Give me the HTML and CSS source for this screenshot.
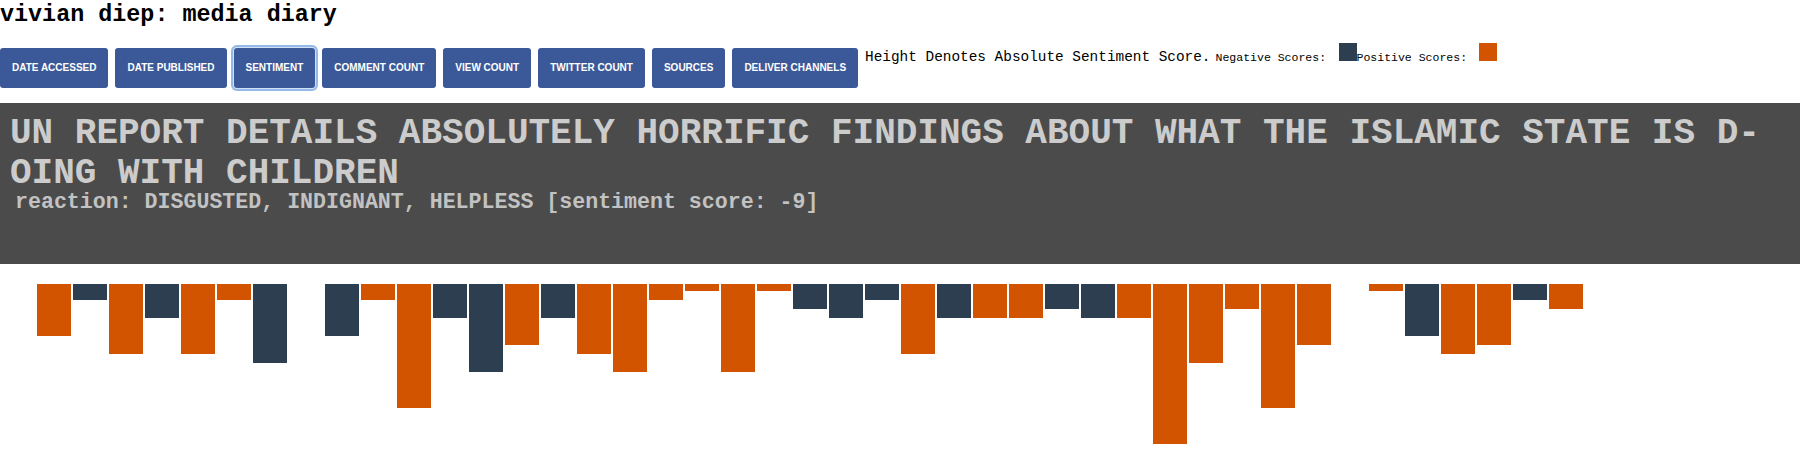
FILE: index.html
```html
<!DOCTYPE html>
<html>
<head>
<meta charset="utf-8">
<title>vivian diep: media diary</title>
<link rel="stylesheet" href="styles.css">
</head>
<body>
<h1 class="title">vivian diep: media diary</h1>
<div class="toolbar">
  <button class="btn">DATE ACCESSED</button>
  <button class="btn">DATE PUBLISHED</button>
  <button class="btn btn-focus">SENTIMENT</button>
  <button class="btn">COMMENT COUNT</button>
  <button class="btn">VIEW COUNT</button>
  <button class="btn">TWITTER COUNT</button>
  <button class="btn">SOURCES</button>
  <button class="btn">DELIVER CHANNELS</button>
  <div class="legend"><span class="legend-main">Height Denotes Absolute Sentiment Score.</span><small class="legend-small first">Negative Scores: </small><span class="swatch neg"></span><small class="legend-small">Positive Scores: </small><span class="swatch pos"></span></div>
</div>
<div class="headline-box">
  <div class="headline">UN REPORT DETAILS ABSOLUTELY HORRIFIC FINDINGS ABOUT WHAT THE ISLAMIC STATE IS D-<br>OING WITH CHILDREN</div>
  <div class="reaction">reaction: DISGUSTED, INDIGNANT, HELPLESS [sentiment score: -9]</div>
</div>
<svg class="chart" width="1800" height="180" viewBox="0 0 1800 180">
  <g class="bars">
    <rect class="pos" x="37" y="20" width="34" height="52"/>
    <rect class="neg" x="73" y="20" width="34" height="16"/>
    <rect class="pos" x="109" y="20" width="34" height="70"/>
    <rect class="neg" x="145" y="20" width="34" height="34"/>
    <rect class="pos" x="181" y="20" width="34" height="70"/>
    <rect class="pos" x="217" y="20" width="34" height="16"/>
    <rect class="neg" x="253" y="20" width="34" height="79"/>
    <rect class="neg" x="325" y="20" width="34" height="52"/>
    <rect class="pos" x="361" y="20" width="34" height="16"/>
    <rect class="pos" x="397" y="20" width="34" height="124"/>
    <rect class="neg" x="433" y="20" width="34" height="34"/>
    <rect class="neg" x="469" y="20" width="34" height="88"/>
    <rect class="pos" x="505" y="20" width="34" height="61"/>
    <rect class="neg" x="541" y="20" width="34" height="34"/>
    <rect class="pos" x="577" y="20" width="34" height="70"/>
    <rect class="pos" x="613" y="20" width="34" height="88"/>
    <rect class="pos" x="649" y="20" width="34" height="16"/>
    <rect class="pos" x="685" y="20" width="34" height="7"/>
    <rect class="pos" x="721" y="20" width="34" height="88"/>
    <rect class="pos" x="757" y="20" width="34" height="7"/>
    <rect class="neg" x="793" y="20" width="34" height="25"/>
    <rect class="neg" x="829" y="20" width="34" height="34"/>
    <rect class="neg" x="865" y="20" width="34" height="16"/>
    <rect class="pos" x="901" y="20" width="34" height="70"/>
    <rect class="neg" x="937" y="20" width="34" height="34"/>
    <rect class="pos" x="973" y="20" width="34" height="34"/>
    <rect class="pos" x="1009" y="20" width="34" height="34"/>
    <rect class="neg" x="1045" y="20" width="34" height="25"/>
    <rect class="neg" x="1081" y="20" width="34" height="34"/>
    <rect class="pos" x="1117" y="20" width="34" height="34"/>
    <rect class="pos" x="1153" y="20" width="34" height="160"/>
    <rect class="pos" x="1189" y="20" width="34" height="79"/>
    <rect class="pos" x="1225" y="20" width="34" height="25"/>
    <rect class="pos" x="1261" y="20" width="34" height="124"/>
    <rect class="pos" x="1297" y="20" width="34" height="61"/>
    <rect class="pos" x="1369" y="20" width="34" height="7"/>
    <rect class="neg" x="1405" y="20" width="34" height="52"/>
    <rect class="pos" x="1441" y="20" width="34" height="70"/>
    <rect class="pos" x="1477" y="20" width="34" height="61"/>
    <rect class="neg" x="1513" y="20" width="34" height="16"/>
    <rect class="pos" x="1549" y="20" width="34" height="25"/>
  </g>
</svg>
</body>
</html>
```
FILE: styles.css
```css
html, body {
  margin: 0;
  padding: 0;
  background: #ffffff;
}

body {
  font-family: "Liberation Mono", "Courier New", monospace;
  color: #000;
}

.title {
  margin: 0;
  padding-top: 2px;
  font-size: 23.4px;
  line-height: 27px;
  font-weight: bold;
  font-family: "Liberation Mono", "Courier New", monospace;
}

.toolbar {
  display: flex;
  align-items: flex-start;
  gap: 7px;
  margin-top: 19px;
}

.btn {
  flex: none;
  margin: 0;
  border: 0;
  border-radius: 3px;
  background: #3b5998;
  color: #ffffff;
  font-family: "Liberation Sans", Arial, Helvetica, sans-serif;
  font-weight: bold;
  font-size: 10px;
  line-height: 14px;
  height: 40px;
  padding: 0 12px;
  white-space: nowrap;
}

.btn-focus {
  box-shadow: 0 0 0 1px #cfe0f5, 0 0 0 3px #93b9e8;
}

.legend {
  margin-top: -5px;
  font-size: 14.4px;
  line-height: 18px;
  white-space: nowrap;
}

.legend-small {
  font-size: 11.52px;
}

.legend-small.first {
  margin-left: 5px;
}

.swatch {
  display: inline-block;
  width: 18px;
  height: 18px;
  margin-left: 5.5px;
}

.swatch.neg {
  background: #2c3e50;
}

.swatch.pos {
  background: #d35400;
}

.headline-box {
  width: 1800px;
  margin-top: 15px;
  box-sizing: border-box;
  height: 161px;
  padding: 11px 0 0 10px;
  background: #4b4b4b;
}

.headline {
  font-size: 36px;
  line-height: 40px;
  font-weight: bold;
  color: #cccccc;
  white-space: nowrap;
}

.reaction {
  padding-left: 5px;
  font-size: 21.6px;
  line-height: 16px;
  font-weight: bold;
  color: #c2c2c2;
  white-space: nowrap;
}

.chart {
  display: block;
}

.chart .pos {
  fill: #d35400;
}

.chart .neg {
  fill: #2c3e50;
}
```
